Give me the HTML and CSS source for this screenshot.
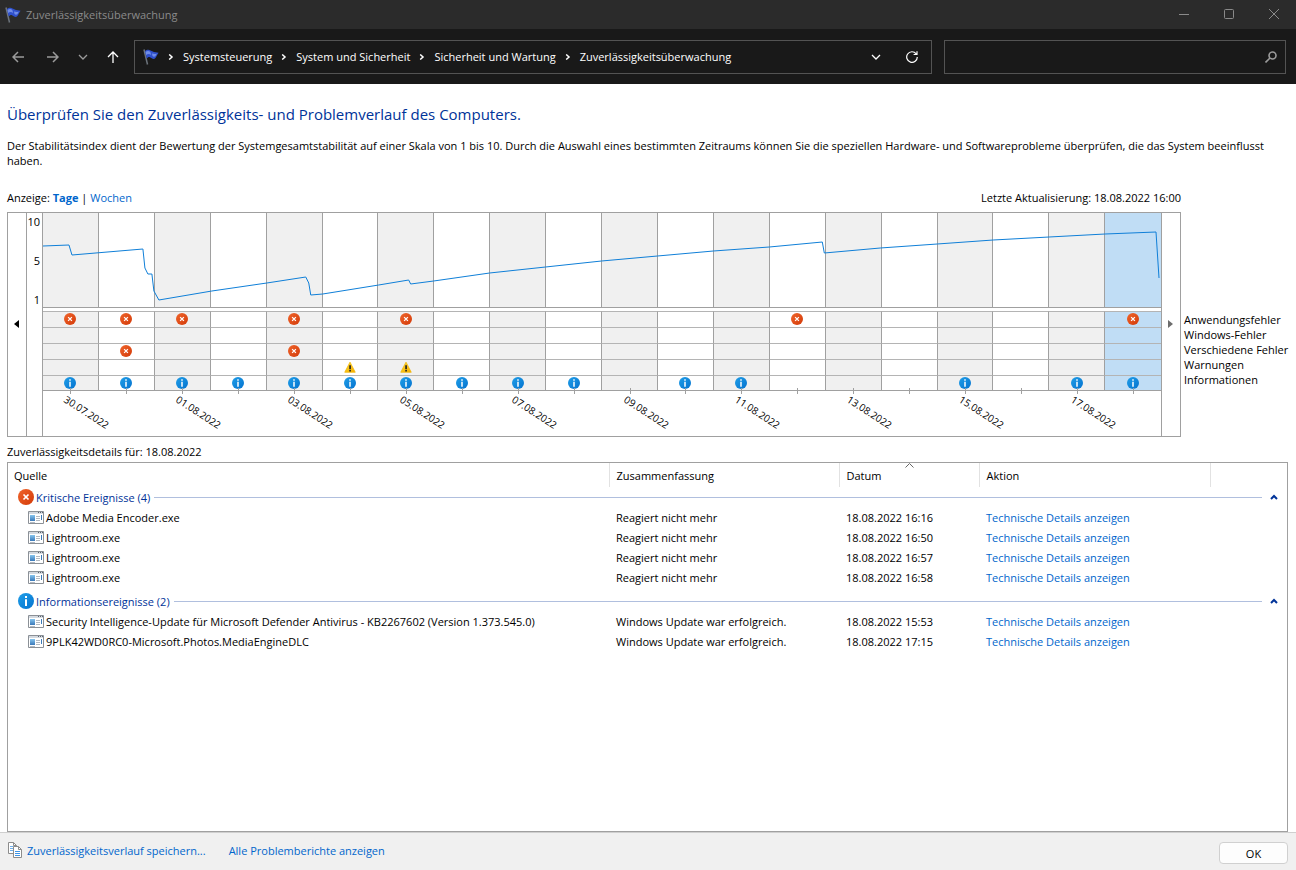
FILE: index.html
```
<!DOCTYPE html>
<html lang="de">

<head>
    <meta charset="UTF-8">
    <meta name="viewport" content="width=device-width, initial-scale=1.0">
    <title>Zuverlässigkeitsüberwachung</title>
    <link rel="stylesheet" href="styles.css">
</head>

<body>
    <!-- shared icons -->
    <svg class="sprite" aria-hidden="true">
        <defs>
            <linearGradient id="red" x1="0" y1="0" x2="1" y2="1">
                <stop offset="0" stop-color="#f0652c" />
                <stop offset="1" stop-color="#d33a08" />
            </linearGradient>
            <linearGradient id="blue" x1="0" y1="0" x2="1" y2="1">
                <stop offset="0" stop-color="#1f9ee8" />
                <stop offset="1" stop-color="#0573cf" />
            </linearGradient>
            <linearGradient id="yellow" x1="0" y1="0" x2="1" y2="1">
                <stop offset="0" stop-color="#ffdc2e" />
                <stop offset="1" stop-color="#f5ac00" />
            </linearGradient>
            <linearGradient id="pane" x1="0" y1="0" x2="0" y2="1">
                <stop offset="0" stop-color="#86c5ee" />
                <stop offset="1" stop-color="#3a78b8" />
            </linearGradient>
        </defs>
        <symbol id="flag" viewBox="0 0 16 16">
            <path d="M1 .5l3.500 15" stroke="#6d747c" stroke-width="1.500" fill="none" />
            <path d="M2 2C3.500.6 6 .2 7.500 1.500L11 3l4.600.8C14 5.500 13.500 8 12 9.500C10 11 8.500 8.600 7 8.200C5.500 7.800 4.600 8.600 3.700 9.600z" fill="#2f50cc" />
            <path d="M2.500 3C4 1.600 6 1.500 7.300 3L8.200 6C6.500 4.600 4.500 4.800 3 6zM9 4.500c1.800.6 3.300.5 4.800.2l-1.500 2.600c-1.200.6-2 .3-2.800-.2z" fill="#6f8ce8" />
        </symbol>
        <symbol id="error" viewBox="0 0 16 16">
            <circle cx="8" cy="8" r="8" fill="url(#red)" />
            <path d="M5.500 5.500l5 5M10.500 5.500l-5 5" stroke="#fff" stroke-width="1.700" />
        </symbol>
        <symbol id="info" viewBox="0 0 16 16">
            <circle cx="8" cy="8" r="8" fill="url(#blue)" />
            <path d="M7 3h2v2H7zM7 6.200h2V13H7z" fill="#fff" />
        </symbol>
        <symbol id="warning" viewBox="0 0 16 16">
            <path d="M8 1.500L15 15H1z" fill="url(#yellow)" stroke="#f0b400" stroke-linejoin="round" />
            <path d="M7 5.500h2.200V11H7zM7 12h2.200v2H7z" fill="#222" />
        </symbol>
        <symbol id="program" viewBox="0 0 16 13">
            <path d="M.5.500h15v12H.5z" fill="#fff" stroke="#8b9096" />
            <path d="M1 1h14v2H1z" fill="#d5dae0" />
            <path d="M10 1h1v1h-1zM12 1h1v1h-1zM14 1h1v1h-1z" fill="#59636e" />
            <path d="M2 4h5v6H2z" fill="url(#pane)" />
            <path d="M8 5.500h4M8 7.500h4M8 9.500h4M2 11.500h5" stroke="#b3bac2" />
            <path d="M13.500 4v5" stroke="#3b7ab8" />
        </symbol>
        <symbol id="chevron" viewBox="0 0 10 10">
            <path d="M1 3l4 4 4-4" fill="none" stroke="currentColor" stroke-width="1.300" />
        </symbol>
        <symbol id="crumb" viewBox="0 0 6 6">
            <path d="M1.200.5L4 3 1.200 5.500" fill="none" stroke="currentColor" stroke-width="1.500" />
        </symbol>
        <symbol id="collapse" viewBox="0 0 8 6">
            <path d="M1 5l3-3 3 3" fill="none" stroke="currentColor" stroke-width="2" />
        </symbol>
    </svg>

    <header class="titlebar">
        <svg class="icon-16"><use href="#flag" /></svg>
        <span class="titlebar-text">Zuverlässigkeitsüberwachung</span>
        <button class="window-button" aria-label="Minimieren"><svg width="10" height="10"><path d="M0 5.500h10" stroke="currentColor" /></svg></button>
        <button class="window-button" aria-label="Maximieren"><svg width="10" height="10"><rect x=".5" y=".5" width="9" height="9" rx="1" fill="none" stroke="currentColor" /></svg></button>
        <button class="window-button" aria-label="Schließen"><svg width="10" height="10"><path d="M0 0l10 10M10 0L0 10" stroke="currentColor" /></svg></button>
    </header>

    <nav class="navbar">
        <div class="nav-buttons">
            <button class="nav-button" aria-label="Zurück"><svg width="12" height="12"><path d="M12 6H1M6 1L1 6l5 5" fill="none" stroke="currentColor" stroke-width="1.500" /></svg></button>
            <button class="nav-button" aria-label="Vorwärts"><svg width="12" height="12"><path d="M0 6h11M6 1l5 5-5 5" fill="none" stroke="currentColor" stroke-width="1.500" /></svg></button>
            <button class="nav-button narrow" aria-label="Zuletzt besucht"><svg width="10" height="10"><use href="#chevron" /></svg></button>
            <button class="nav-button active" aria-label="Nach oben"><svg width="12" height="12"><path d="M6 12V1M1 6l5-5 5 5" fill="none" stroke="currentColor" stroke-width="1.300" /></svg></button>
        </div>
        <div class="address">
            <svg class="icon-16"><use href="#flag" /></svg>
            <svg class="crumb-arrow"><use href="#crumb" /></svg>
            <a href="#">Systemsteuerung</a>
            <svg class="crumb-arrow"><use href="#crumb" /></svg>
            <a href="#">System und Sicherheit</a>
            <svg class="crumb-arrow"><use href="#crumb" /></svg>
            <a href="#">Sicherheit und Wartung</a>
            <svg class="crumb-arrow"><use href="#crumb" /></svg>
            <a href="#">Zuverlässigkeitsüberwachung</a>
            <button class="address-button first" aria-label="Verlauf"><svg width="10" height="10"><use href="#chevron" /></svg></button>
            <button class="address-button" aria-label="Aktualisieren"><svg width="12" height="12" viewBox="0 0 12 12"><path d="M10.200 2.800A5.300 5.300 0 1 0 11.300 6M11 .3v3.200H7.600" fill="none" stroke="currentColor" stroke-width="1.200" /></svg></button>
        </div>
        <div class="search">
            <input type="text" aria-label="Suchen">
            <svg width="12" height="12"><circle cx="7.500" cy="4.500" r="3.500" fill="none" stroke="currentColor" stroke-width="1.600" /><path d="M5 7L.5 11.500" stroke="currentColor" stroke-width="1.600" /></svg>
        </div>
    </nav>

    <main class="content">
        <h1>Überprüfen Sie den Zuverlässigkeits- und Problemverlauf des Computers.</h1>
        <p class="intro">Der Stabilitätsindex dient der Bewertung der Systemgesamtstabilität auf einer Skala von 1 bis 10. Durch die Auswahl eines bestimmten Zeitraums können Sie die speziellen Hardware- und Softwareprobleme überprüfen, die das System beeinflusst haben.</p>

        <div class="history">
            <div class="history-main">
                <div class="view-bar">
                    <span>Anzeige: <a href="#" class="current">Tage</a> | <a href="#">Wochen</a></span>
                    <span>Letzte Aktualisierung: 18.08.2022 16:00</span>
                </div>
                <div class="chart">
                    <button class="scroll-button" aria-label="Frühere Tage"><svg width="5" height="8"><path d="M5 0v8L0 4z" fill="#000" /></svg></button>
                    <div class="scale"><span>10</span><span>5</span><span>1</span></div>
                    <div class="plot">
                        <div class="days" id="days"></div>
                        <svg class="curve" viewBox="0 0 1119 94" preserveAspectRatio="none">
                            <polyline points="0,33 26,32 29,42 100,36 102,55 105,61 109,61 111,78 116,87 169,78 224,70 263,64 266,70 268,82 280,81 336,72 366,67 368,71 391,68 447,60 503,54 559,48 615,43 671,38 727,34 780,29 782,40 838,35 895,31 951,27 1007,24 1063,21 1114,19 1117,65" />
                        </svg>
                    </div>
                    <button class="scroll-button" aria-label="Spätere Tage"><svg width="5" height="8"><path d="M0 0v8l5-4z" fill="#6d6d6d" /></svg></button>
                </div>
            </div>
            <ul class="legend">
                <li>Anwendungsfehler</li>
                <li>Windows-Fehler</li>
                <li>Verschiedene Fehler</li>
                <li>Warnungen</li>
                <li>Informationen</li>
            </ul>
        </div>

        <div class="details-title">Zuverlässigkeitsdetails für: 18.08.2022</div>
        <div class="details">
            <table>
                <colgroup>
                    <col>
                    <col class="col-summary">
                    <col class="col-date">
                    <col class="col-action">
                    <col class="col-rest">
                </colgroup>
                <thead>
                    <tr>
                        <th>Quelle</th>
                        <th>Zusammenfassung</th>
                        <th class="sorted">Datum<svg class="sort-arrow" width="9" height="5"><path d="M.5 4.500l4-4 4 4" fill="none" stroke="#666" /></svg></th>
                        <th>Aktion</th>
                        <td></td>
                    </tr>
                </thead>
                <tbody>
                    <tr>
                        <td colspan="5" class="group-cell">
                            <div class="group"><svg class="icon-16"><use href="#error" /></svg><span>Kritische Ereignisse (4)</span><hr><button aria-label="Kritische Ereignisse einklappen"><svg width="8" height="6"><use href="#collapse" /></svg></button></div>
                        </td>
                    </tr>
                    <tr>
                        <td class="source"><svg class="program-icon"><use href="#program" /></svg>Adobe Media Encoder.exe</td>
                        <td>Reagiert nicht mehr</td>
                        <td>18.08.2022 16:16</td>
                        <td><a href="#">Technische Details anzeigen</a></td>
                        <td></td>
                    </tr>
                    <tr>
                        <td class="source"><svg class="program-icon"><use href="#program" /></svg>Lightroom.exe</td>
                        <td>Reagiert nicht mehr</td>
                        <td>18.08.2022 16:50</td>
                        <td><a href="#">Technische Details anzeigen</a></td>
                        <td></td>
                    </tr>
                    <tr>
                        <td class="source"><svg class="program-icon"><use href="#program" /></svg>Lightroom.exe</td>
                        <td>Reagiert nicht mehr</td>
                        <td>18.08.2022 16:57</td>
                        <td><a href="#">Technische Details anzeigen</a></td>
                        <td></td>
                    </tr>
                    <tr>
                        <td class="source"><svg class="program-icon"><use href="#program" /></svg>Lightroom.exe</td>
                        <td>Reagiert nicht mehr</td>
                        <td>18.08.2022 16:58</td>
                        <td><a href="#">Technische Details anzeigen</a></td>
                        <td></td>
                    </tr>
                </tbody>
                <tbody>
                    <tr>
                        <td colspan="5" class="group-cell">
                            <div class="group"><svg class="icon-16"><use href="#info" /></svg><span>Informationsereignisse (2)</span><hr><button aria-label="Informationsereignisse einklappen"><svg width="8" height="6"><use href="#collapse" /></svg></button></div>
                        </td>
                    </tr>
                    <tr>
                        <td class="source"><svg class="program-icon"><use href="#program" /></svg>Security Intelligence-Update für Microsoft Defender Antivirus - KB2267602 (Version 1.373.545.0)</td>
                        <td>Windows Update war erfolgreich.</td>
                        <td>18.08.2022 15:53</td>
                        <td><a href="#">Technische Details anzeigen</a></td>
                        <td></td>
                    </tr>
                    <tr>
                        <td class="source"><svg class="program-icon"><use href="#program" /></svg>9PLK42WD0RC0-Microsoft.Photos.MediaEngineDLC</td>
                        <td>Windows Update war erfolgreich.</td>
                        <td>18.08.2022 17:15</td>
                        <td><a href="#">Technische Details anzeigen</a></td>
                        <td></td>
                    </tr>
                </tbody>
            </table>
        </div>
    </main>

    <footer class="footer">
        <svg width="16" height="16">
            <path d="M.5.500h5l3 3v8h-8z" fill="#fff" stroke="#8c8c8c" />
            <path d="M5.500.500v3h3" fill="none" stroke="#8c8c8c" />
            <path d="M2 4.500h3M2 6.500h4M2 8.500h4" stroke="#6fb0ec" />
            <path d="M5.500 4.500h5l3 3v8h-8z" fill="#fff" stroke="#8c8c8c" />
            <path d="M10.500 4.500v3h3" fill="none" stroke="#8c8c8c" />
            <path d="M7 9.500h5M7 11.500h5M7 13.500h5" stroke="#3d94e6" />
        </svg>
        <a href="#">Zuverlässigkeitsverlauf speichern...</a>
        <a href="#">Alle Problemberichte anzeigen</a>
        <button class="ok-button">OK</button>
    </footer>

    <script>
        // e = error, w = warning, i = info; one letter per event row, top to bottom
        const days = [
            { label: '30.07.2022', events: 'e---i' },
            { events: 'e-e-i' },
            { label: '01.08.2022', events: 'e---i' },
            { events: '----i' },
            { label: '03.08.2022', events: 'e-e-i' },
            { events: '---wi' },
            { label: '05.08.2022', events: 'e--wi' },
            { events: '----i' },
            { label: '07.08.2022', events: '----i' },
            { events: '----i' },
            { label: '09.08.2022', events: '-----' },
            { events: '----i' },
            { label: '11.08.2022', events: '----i' },
            { events: 'e----' },
            { label: '13.08.2022', events: '-----' },
            { events: '-----' },
            { label: '15.08.2022', events: '----i' },
            { events: '-----' },
            { label: '17.08.2022', events: '----i' },
            { events: 'e---i', selected: true }
        ];
        const icons = { e: 'error', w: 'warning', i: 'info' };

        document.getElementById('days').innerHTML = days.map(day => {
            const cells = [...day.events].map(ev =>
                `<div class="event">${icons[ev] ? `<svg class="event-icon"><use href="#${icons[ev]}" /></svg>` : ''}</div>`
            ).join('');
            return `<div class="day${day.selected ? ' selected' : ''}">
                <div class="index"></div>
                <div class="events">${cells}</div>
                <div class="tick">${day.label ? `<span class="date">${day.label}</span>` : ''}</div>
            </div>`;
        }).join('');
    </script>
</body>

</html>
```
FILE: styles.css
```
* {
    box-sizing: border-box;
}

body {
    font-family: "Open Sans", "Noto Sans", sans-serif;
    font-size: 11px;
    line-height: 15px;
    color: #000;
    background: #fff;
    display: flex;
    flex-direction: column;
    min-height: 100vh;
    margin: 0;
}

button {
    font: inherit;
    color: inherit;
    background: none;
    border: none;
    padding: 0;
    display: flex;
    align-items: center;
    justify-content: center;
}

a {
    color: #0066cc;
    text-decoration: none;
}

svg {
    flex: none;
}

.sprite {
    position: absolute;
    width: 0;
    height: 0;
}

.icon-16 {
    width: 16px;
    height: 16px;
}

/* title bar */
.titlebar {
    display: flex;
    align-items: center;
    height: 29px;
    padding-left: 5px;
    background: #2b2b2b;
    color: #8a8a8a;
}

.titlebar-text {
    flex: 1;
    padding-left: 5px;
}

.window-button {
    width: 45px;
    height: 29px;
    padding-bottom: 2px;
}

/* navigation */
.navbar {
    display: grid;
    grid-template-columns: 134px 9fr 4fr;
    align-items: center;
    height: 55px;
    padding-right: 10px;
    background: #191919;
    color: #fff;
}

.nav-buttons {
    display: flex;
}

.nav-button {
    width: 35px;
    height: 34px;
    color: #9b9b9b;
}

.nav-button.narrow {
    width: 26px;
}

.nav-button.active {
    width: 34px;
    color: #fff;
}

.address {
    display: flex;
    align-items: center;
    height: 34px;
    padding: 0 1px 0 8px;
    border: 1px solid #535353;
}

.address a {
    color: #fff;
}

.crumb-arrow {
    width: 6px;
    height: 6px;
    margin: 0 9px;
}

.address-button {
    width: 36px;
    height: 32px;
}

.address-button.first {
    margin-left: auto;
}

.search {
    display: flex;
    align-items: center;
    height: 34px;
    margin-left: 12px;
    padding-right: 8px;
    border: 1px solid #535353;
    color: #9b9b9b;
}

.search input {
    flex: 1;
    min-width: 0;
    height: 32px;
    padding: 0 8px;
    border: none;
    outline: none;
    background: none;
    color: #fff;
    font: inherit;
}

/* page */
.content {
    flex: 1;
    display: flex;
    flex-direction: column;
    padding: 20px 8px 0 7px;
}

h1 {
    margin: 0;
    font-size: 15px;
    line-height: 20px;
    font-weight: normal;
    color: #003399;
}

.intro {
    margin: 14px 0 0;
}

.history {
    display: flex;
    margin-top: 22px;
}

.history-main {
    flex: 1;
}

.view-bar {
    display: flex;
    justify-content: space-between;
    margin-bottom: 7px;
}

.view-bar .current {
    font-weight: bold;
}

/* stability chart */
.chart {
    display: flex;
    height: 225px;
    border: 1px solid #a0a0a0;
}

.scroll-button {
    width: 18px;
    padding: 0 2px 2px 0;
}

.scale {
    display: flex;
    flex-direction: column;
    width: 16px;
    padding: 1px 2px 0 0;
    gap: 24px;
    border-left: 1px solid #a0a0a0;
    text-align: right;
}

.plot {
    position: relative;
    flex: 1;
    border: solid #a0a0a0;
    border-width: 0 1px;
}

.days {
    display: flex;
}

.day {
    flex: 1;
}

.index {
    height: 95px;
    border-right: 1px solid #a0a0a0;
}

.events {
    margin-top: 3px;
}

.index,
.events {
    border-bottom: 1px solid #a0a0a0;
}

.day:nth-child(odd) .index,
.day:nth-child(odd) .event {
    background: #f0f0f0;
}

.day.selected .index,
.day.selected .event {
    background: #c0ddf5;
}

.day:last-child .index,
.day:last-child .event {
    border-right: none;
}

.event {
    display: flex;
    justify-content: center;
    height: 16px;
    padding-top: 1px;
    border-top: 1px solid #b4b4b4;
    border-right: 1px solid #a0a0a0;
}

.event:last-child {
    height: 15px;
}

.event-icon {
    width: 12px;
    height: 12px;
}

.tick {
    position: relative;
    width: 1px;
    height: 6px;
    margin: -3px auto 0;
    background: #a0a0a0;
}

.date {
    position: absolute;
    top: 3px;
    left: -5px;
    font-size: 10px;
    transform: rotate(33deg);
    transform-origin: 0 50%;
}

.curve {
    position: absolute;
    top: 0;
    left: 0;
    width: 100%;
    height: 94px;
}

.curve polyline {
    fill: none;
    stroke: #0f7fd8;
    vector-effect: non-scaling-stroke;
}

.legend {
    width: 107px;
    margin: 0;
    padding: 122px 0 0 3px;
    list-style: none;
    white-space: nowrap;
}

/* event list */
.details-title {
    margin: 7px 0 3px;
}

.details {
    flex: 1;
    border: 1px solid #a0a0a0;
}

table {
    width: 100%;
    table-layout: fixed;
    border-collapse: collapse;
}

.col-summary {
    width: 230px;
}

.col-date {
    width: 140px;
}

.col-action {
    width: 231px;
}

.col-rest {
    width: 77px;
}

th,
td {
    height: 20px;
    padding: 0 7px;
    text-align: left;
    font-weight: normal;
    white-space: nowrap;
}

th {
    height: 24px;
    border-right: 1px solid #e2e2e2;
}

th:first-child {
    padding-left: 6px;
}

.sorted {
    position: relative;
}

.sort-arrow {
    position: absolute;
    top: 0;
    left: calc(50% - 4px);
}

.source {
    padding-left: 20px;
}

.program-icon {
    width: 16px;
    height: 13px;
    margin: 1px 2px 0 0;
    vertical-align: top;
}

.group-cell {
    padding: 0 5px 0 10px;
}

tbody + tbody .group-cell {
    height: 24px;
    padding-top: 4px;
}

.group {
    display: flex;
    align-items: center;
    color: #003399;
}

.group span {
    padding: 0 4px 0 2px;
}

.group hr {
    flex: 1;
    margin: 0;
    border: none;
    border-top: 1px solid #b0bfde;
}

.group button {
    width: 16px;
    height: 16px;
    margin-left: 4px;
}

/* footer */
.footer {
    display: flex;
    align-items: center;
    height: 38px;
    padding: 0 8px 3px;
    background: #f0f0f0;
    border-top: 1px solid #cfcfcf;
}

.footer a {
    margin: 0 20px 0 3px;
}

.ok-button {
    align-self: flex-end;
    width: 69px;
    height: 22px;
    margin: 0 0 3px auto;
    background: #fdfdfd;
    border: 1px solid #d0d0d0;
    border-radius: 4px;
}
```
